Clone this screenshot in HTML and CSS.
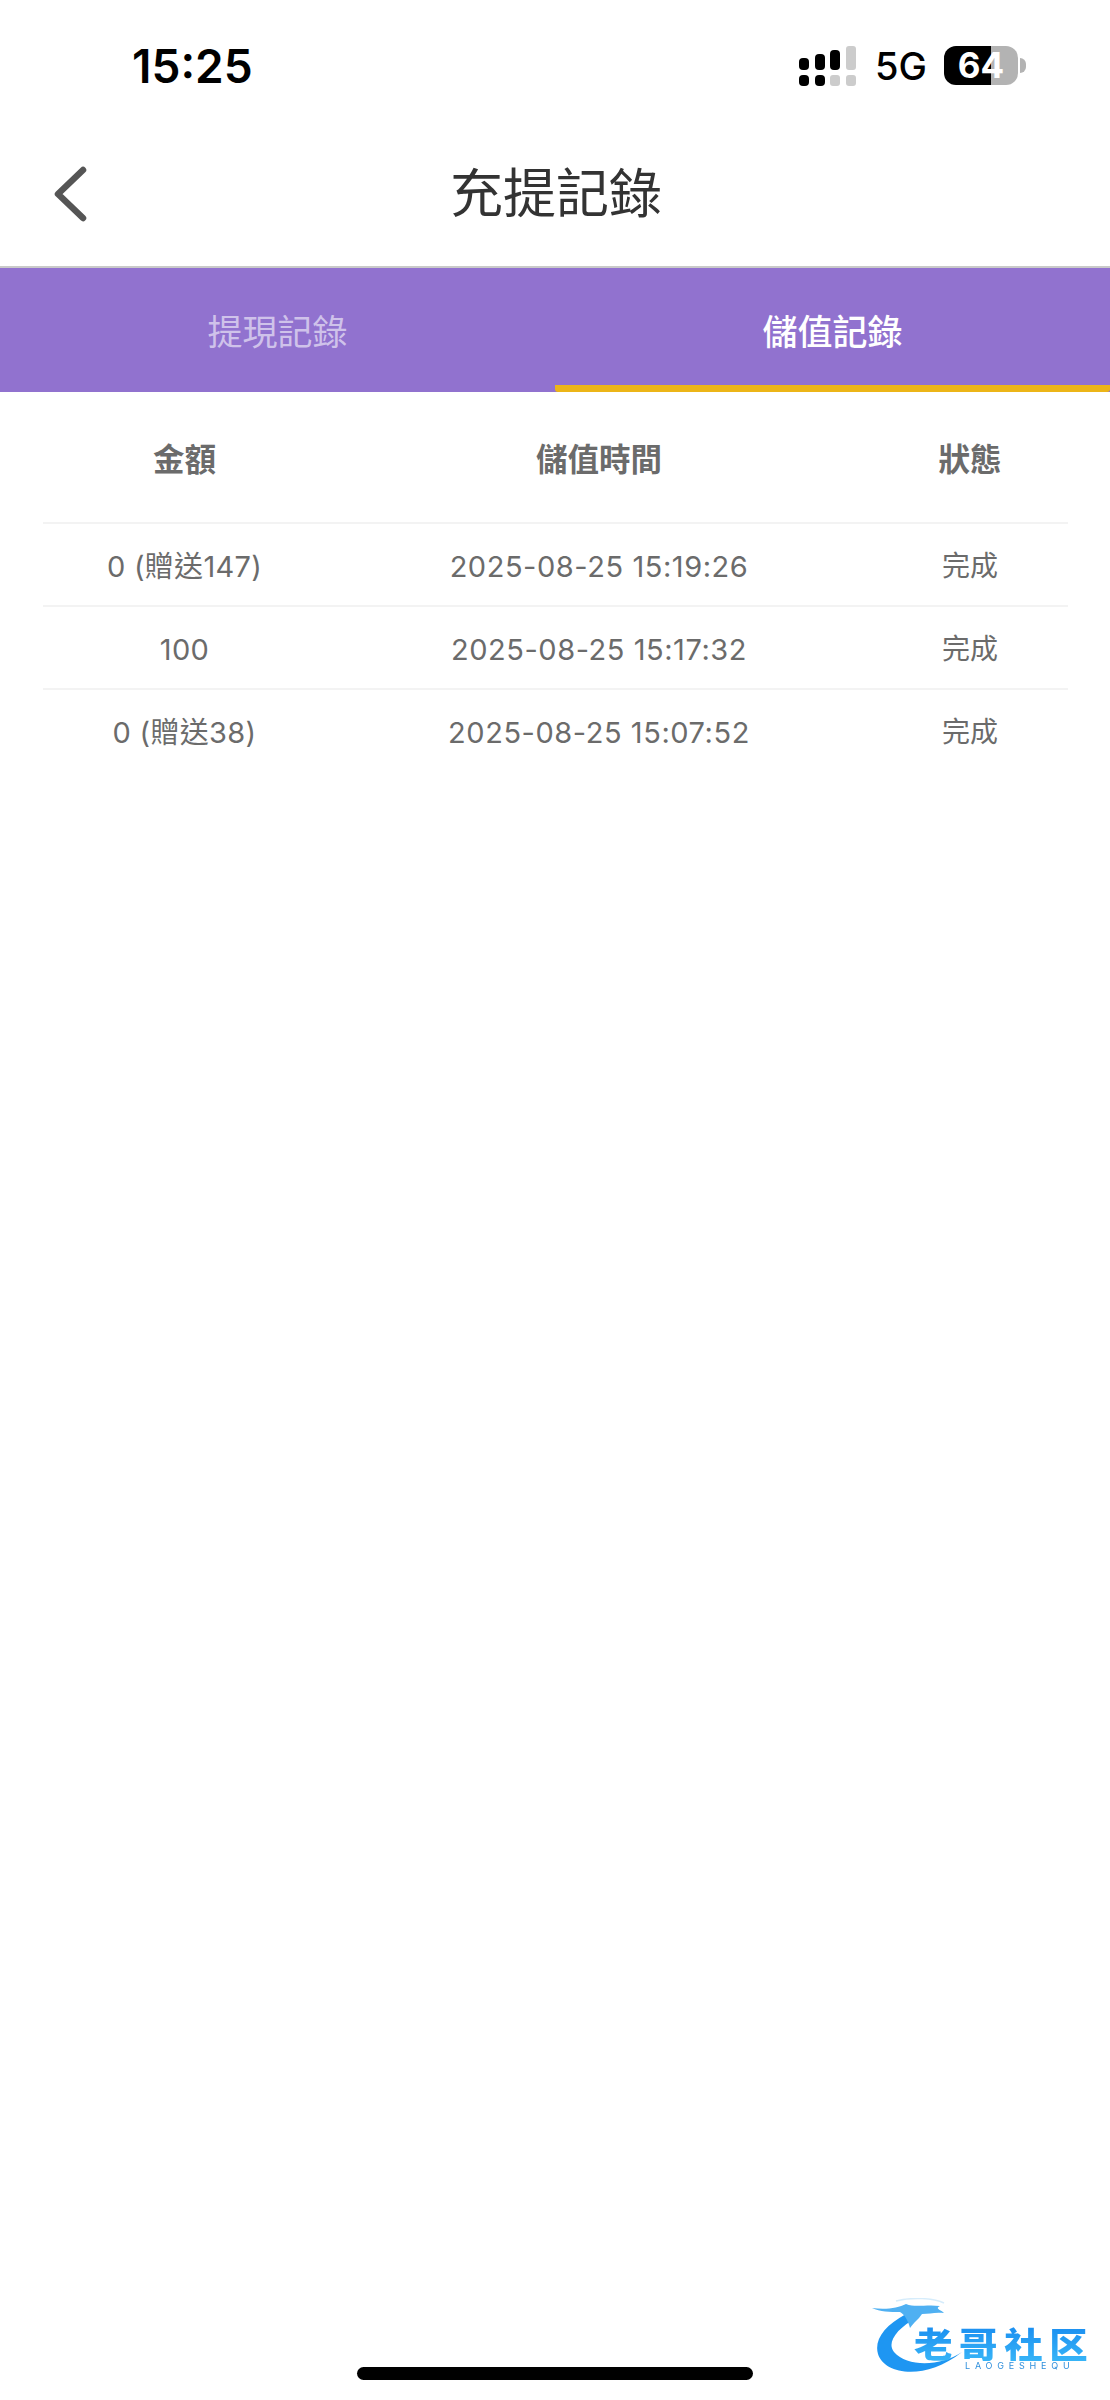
FILE: index.html
```html
<!DOCTYPE html>
<html lang="zh-Hant">
<head>
  <meta charset="UTF-8">
  <meta name="viewport" content="width=device-width, initial-scale=1.0">
  <title>充提記錄</title>
  <link rel="stylesheet" href="styles.css">
</head>
<body>
  <div class="page">
    <div class="status-bar">
      <span class="clock">15:25</span>
      <div class="status-icons">
        <svg class="signal" width="57" height="40" viewBox="0 0 57 40">
          <rect x="0" y="12" width="10" height="12" rx="4" fill="#000"/>
          <rect x="16" y="8" width="10" height="16" rx="4" fill="#000"/>
          <rect x="31" y="4" width="10" height="20" rx="4" fill="#000"/>
          <rect x="47" y="0" width="10" height="24" rx="3" fill="#ccc"/>
          <rect x="0" y="29" width="10" height="11" rx="4" fill="#000"/>
          <rect x="16" y="29" width="10" height="11" rx="4" fill="#000"/>
          <rect x="31" y="29" width="10" height="11" rx="3" fill="#ccc"/>
          <rect x="47" y="29" width="10" height="11" rx="3" fill="#ccc"/>
        </svg>
        <span class="network">5G</span>
        <div class="battery">64</div>
      </div>
    </div>

    <div class="nav-bar">
      <a class="back" href="#">
        <svg width="34" height="58" viewBox="0 0 34 58">
          <path d="M30 5 L5 29 L30 53" fill="none" stroke="#555" stroke-width="6.5" stroke-linecap="round" stroke-linejoin="round"/>
        </svg>
      </a>
      <h1>充提記錄</h1>
    </div>

    <div class="tabs">
      <div class="tab">提現記錄</div>
      <div class="tab active">儲值記錄</div>
    </div>

    <div class="records">
      <div class="row head">
        <div>金額</div>
        <div>儲值時間</div>
        <div>狀態</div>
      </div>
      <div class="row">
        <div>0 (贈送147)</div>
        <div class="time">2025-08-25 15:19:26</div>
        <div class="state">完成</div>
      </div>
      <div class="row">
        <div>100</div>
        <div class="time">2025-08-25 15:17:32</div>
        <div class="state">完成</div>
      </div>
      <div class="row">
        <div>0 (贈送38)</div>
        <div class="time">2025-08-25 15:07:52</div>
        <div class="state">完成</div>
      </div>
    </div>

    <div class="home-bar"></div>

    <div class="watermark">
      <svg class="dragon" width="130" height="80" viewBox="0 0 130 80">
        <path d="M34 16 C12 28 2 42 6 56 C12 76 52 84 90 54 C70 68 36 70 22 54 C14 44 26 30 44 20 Z" fill="#1e96f2"/>
        <path d="M0 10 C14 12 26 10 34 6 C44 10 54 6 68 8 C62 11 70 12 72 15 C62 14 58 16 50 16 C46 22 42 24 38 30 C36 22 32 16 28 14 C18 14 8 14 0 10 Z" fill="#4fb0f2"/>
        <path d="M24 3 C40 -1 62 0 72 5" fill="none" stroke="#d5ecfb" stroke-width="1.5"/>
      </svg>
      <div class="wm-name">老哥社区</div>
      <div class="wm-sub">LAOGESHEQU</div>
    </div>
  </div>
</body>
</html>
```

FILE: styles.css
```css
* {
  box-sizing: border-box;
}
body {
  margin: 0;
  background: #fff;
  font-family: 'Inter', 'Noto Sans CJK TC', sans-serif;
  color: #6b6b6b;
}
.page {
  position: relative;
  display: flex;
  flex-direction: column;
  height: 2400px;
  overflow: hidden;
}

/* status bar */
.status-bar {
  display: flex;
  justify-content: space-between;
  align-items: center;
  height: 131px;
  padding: 0 92px 0 132px;
  color: #000;
}
.clock {
  font-size: 46px;
  font-weight: 600;
}
.status-icons {
  display: flex;
  align-items: center;
}
.signal {
  margin-right: 19px;
}
.network {
  font-size: 38px;
  font-weight: 500;
  margin-right: 17px;
}
.battery {
  position: relative;
  width: 74px;
  height: 39px;
  border-radius: 12px;
  background: linear-gradient(90deg, #000 64%, #b3b3b3 64%);
  color: #fff;
  font-size: 35px;
  font-weight: 700;
  line-height: 39px;
  text-align: center;
}
.battery::after {
  content: '';
  position: absolute;
  top: 12px;
  right: -8px;
  width: 6px;
  height: 15px;
  border-radius: 0 8px 8px 0;
  background: #b3b3b3;
}

/* nav */
.nav-bar {
  position: relative;
  height: 137px;
  padding-left: 2px;
  border-bottom: 2px solid #c9c9c9;
}
.nav-bar h1 {
  margin: 0;
  font-size: 53px;
  font-weight: 400;
  line-height: 127px;
  text-align: center;
  color: #333;
}
.back {
  position: absolute;
  left: 53px;
  top: 34px;
}

/* tabs */
.tabs {
  display: flex;
  height: 124px;
  background: #9172cf;
}
.tab {
  flex: 1;
  font-size: 35px;
  line-height: 128px;
  text-align: center;
  color: #cfc2ea;
}
.tab.active {
  color: #fff;
  font-weight: 500;
  border-bottom: 7px solid #ecb518;
  border-radius: 0 0 3px 3px;
}

/* records table */
.records {
  padding: 0 42px 0 43px;
}
.row {
  display: grid;
  grid-template-columns: 283px 546px 196px;
  height: 83px;
  font-size: 29px;
  letter-spacing: 0.3px;
  line-height: 85px;
  text-align: center;
  border-bottom: 2px solid #f3f3f3;
}
.row:last-child {
  border-bottom: none;
}
.row .time {
  letter-spacing: 0.55px;
}
.row .state {
  font-size: 28px;
  letter-spacing: 0;
}
.row.head {
  height: 132px;
  padding-top: 24px;
  font-size: 31.5px;
  font-weight: 700;
  letter-spacing: 0;
  line-height: 88px;
}

/* home indicator */
.home-bar {
  width: 396px;
  height: 13px;
  margin: auto auto 20px;
  border-radius: 7px;
  background: #000;
}

/* forum watermark */
.watermark {
  position: absolute;
  left: 872px;
  top: 2298px;
  width: 226px;
  height: 80px;
  filter: blur(0.6px);
}
.dragon {
  position: absolute;
  left: 0;
  top: 0;
}
.wm-name {
  position: absolute;
  left: 42px;
  top: 27px;
  font-family: 'Noto Sans CJK SC', sans-serif;
  font-size: 35px;
  font-weight: 900;
  letter-spacing: 6px;
  line-height: 36px;
  white-space: nowrap;
  transform: scaleX(1.1);
  transform-origin: left;
  background: linear-gradient(180deg, #1a8df0, #37b4f7);
  -webkit-background-clip: text;
  background-clip: text;
  color: transparent;
}
.wm-sub {
  position: absolute;
  left: 93px;
  top: 63px;
  font-size: 9px;
  letter-spacing: 4.8px;
  line-height: 10px;
  color: #2f8fdc;
  white-space: nowrap;
}
```
